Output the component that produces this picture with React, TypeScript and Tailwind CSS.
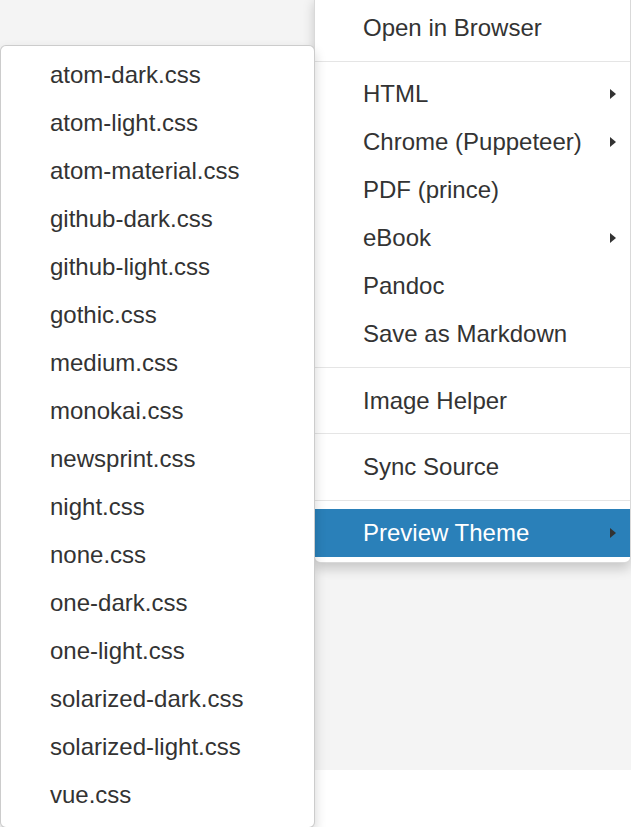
const themes = [
  "atom-dark.css",
  "atom-light.css",
  "atom-material.css",
  "github-dark.css",
  "github-light.css",
  "gothic.css",
  "medium.css",
  "monokai.css",
  "newsprint.css",
  "night.css",
  "none.css",
  "one-dark.css",
  "one-light.css",
  "solarized-dark.css",
  "solarized-light.css",
  "vue.css",
];

type Entry = { label: string; sub?: boolean; active?: boolean } | "divider";

const menu: Entry[] = [
  { label: "Open in Browser" },
  "divider",
  { label: "HTML", sub: true },
  { label: "Chrome (Puppeteer)", sub: true },
  { label: "PDF (prince)" },
  { label: "eBook", sub: true },
  { label: "Pandoc" },
  { label: "Save as Markdown" },
  "divider",
  { label: "Image Helper" },
  "divider",
  { label: "Sync Source" },
  "divider",
  { label: "Preview Theme", sub: true, active: true },
];

function Caret() {
  return (
    <svg width="6" height="10" viewBox="0 0 6 10" className="absolute right-[14px] top-1/2 -translate-y-1/2">
      <path d="M0 0 L6 5 L0 10 Z" fill="#333333" />
    </svg>
  );
}

export default function App() {
  return (
    <div
      className="relative w-[631px] h-[827px] overflow-hidden bg-white text-[#333333]"
      style={{ fontFamily: '"Liberation Sans", Arial, sans-serif' }}
    >
      <div className="h-[770px] bg-[#f4f4f4]" />

      {/* main context menu */}
      <div className="absolute left-[314px] top-[-4px] w-[317px] pt-[7px] pb-[5px] bg-white border border-[rgba(0,0,0,0.15)] rounded-b-[6px] shadow-[0_6px_12px_rgba(0,0,0,0.18)]">
        {menu.map((m, i) =>
          m === "divider" ? (
            <div key={i} className="mt-[8.7px] mb-[8.6px] h-px bg-[#e5e5e5]" />
          ) : (
            <div
              key={i}
              className={
                "relative h-[48px] flex items-center pl-[48px] text-[24px] leading-none " +
                (m.active ? "bg-[#2a80b9] text-white" : "")
              }
            >
              {m.label}
              {m.sub && <Caret />}
            </div>
          )
        )}
      </div>

      {/* theme submenu */}
      <div className="absolute left-0 top-[45px] w-[315px] pt-[5px] pb-[8px] bg-white border border-[rgba(0,0,0,0.2)] rounded-[6px] shadow-[0_6px_12px_rgba(0,0,0,0.18)]">
        {themes.map((t) => (
          <div key={t} className="h-[48px] flex items-center pl-[49px] text-[24px] leading-none">
            {t}
          </div>
        ))}
      </div>
    </div>
  );
}
